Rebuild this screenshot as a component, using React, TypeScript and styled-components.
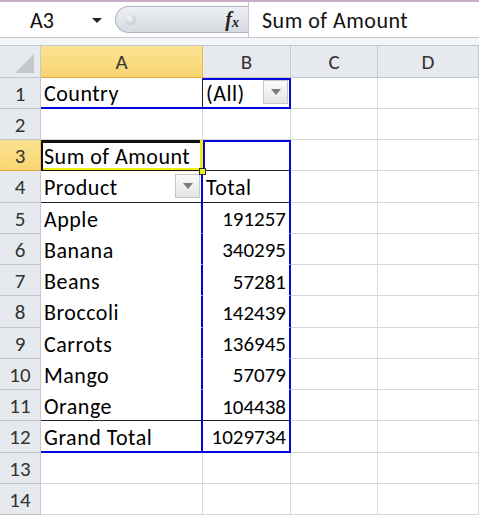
import { Fragment, ReactNode } from 'react';
import styled, { createGlobalStyle, css } from 'styled-components';

const GRID = '#d9d9d9';
const BLUE = '#0606dc';
const YEL = '#f2ef10';
const FONT = `"Carlito", Lato, "Liberation Sans", sans-serif`;

const GlobalStyle = createGlobalStyle`
  html, body { margin: 0; padding: 0; background: #fff; }
  body { font-family: ${FONT}; overflow: hidden; }
  * { box-sizing: border-box; }
`;

interface Edge {
  w: number;
  c: string;
}

const blue2: Edge = { w: 2, c: BLUE };
const black1: Edge = { w: 1, c: '#222' };
const white1: Edge = { w: 1, c: '#fff' };

const line = (e: Edge | undefined) => (e ? `${e.w}px solid ${e.c}` : `1px solid ${GRID}`);

const Window = styled.div`
  width: 479px;
  height: 515px;
  overflow: hidden;
  border-top: 2px solid #c9afc5;
  display: flex;
  flex-direction: column;
`;

const FormulaBar = styled.div`
  height: 37px;
  display: flex;
  align-items: center;
  background: #fff;
  border-bottom: 1px solid #c3c8cf;
`;

const NameBox = styled.div`
  width: 113px;
  height: 100%;
  display: flex;
  align-items: center;
  padding: 2px 11px 0 30px;
  font-size: 22px;
  color: #111;
`;

const Arrow = styled.span`
  margin-left: auto;
  border-left: 5px solid transparent;
  border-right: 5px solid transparent;
  border-top: 5px solid #222;
`;

const Pill = styled.div`
  width: 133px;
  height: 27px;
  margin-left: 2px;
  display: flex;
  align-items: center;
  padding: 0 9px 0 9px;
  border: 1px solid #aeb5c0;
  border-right: none;
  border-radius: 14px 0 0 14px;
  background: linear-gradient(#eef0f3, #d6dae0);
`;

const Dot = styled.span`
  width: 11px;
  height: 11px;
  border-radius: 50%;
  background: radial-gradient(circle at 40% 35%, #f6f6f6, #b9bcc2);
`;

const Fx = styled.span`
  margin-left: auto;
  font-family: "Liberation Serif", serif;
  font-style: italic;
  font-weight: bold;
  font-size: 20px;
  color: #222;
  sub {
    font-size: 14px;
    vertical-align: -1px;
  }
`;

const FormulaInput = styled.div`
  flex: 1;
  height: 100%;
  display: flex;
  align-items: center;
  padding: 2px 0 0 13px;
  border-left: 1px solid #c3c8cf;
  font-size: 22px;
  letter-spacing: 0.5px;
  color: #111;
`;

const Strip = styled.div`
  height: 8px;
  background: #f4f5f7;
  border-bottom: 1px solid #c3c8cf;
`;

const Sheet = styled.div`
  display: grid;
  grid-template-columns: 41px 162px 88px 87px 1fr;
  grid-auto-rows: 31.25px;
`;

const Head = styled.div<{ $sel?: boolean }>`
  display: flex;
  align-items: center;
  justify-content: center;
  padding-top: 2px;
  font-size: 21px;
  color: #333;
  background: #e6e9ed;
  border-right: 1px solid #c6cad0;
  border-bottom: 1px solid #c2c6cc;
  ${(p) =>
    p.$sel &&
    css`
      background: linear-gradient(#fbe293, #f9d570);
      border-right-color: #e9bd4c;
      border-bottom-color: #e2ad3a;
    `}
`;

const Corner = styled(Head)`
  align-items: flex-end;
  justify-content: flex-end;
  padding: 0 6px 4px 0;
`;

interface CellProps {
  $r?: Edge;
  $b?: Edge;
  $t?: Edge;
  $l?: Edge;
  $num?: boolean;
  $sel?: boolean;
}

const Cell = styled.div<CellProps>`
  position: relative;
  display: flex;
  align-items: center;
  justify-content: ${(p) => (p.$num ? 'flex-end' : 'flex-start')};
  padding: 3px 3px 0 3px;
  font-size: ${(p) => (p.$num ? 21 : 22)}px;
  letter-spacing: ${(p) => (p.$num ? 0 : 0.5)}px;
  color: #000;
  background: #fff;
  white-space: nowrap;
  border-right: ${(p) => line(p.$r)};
  border-bottom: ${(p) => line(p.$b)};
  box-shadow: ${(p) =>
    [p.$t && `inset 0 ${p.$t.w}px 0 ${p.$t.c}`, p.$l && `inset ${p.$l.w}px 0 0 ${p.$l.c}`]
      .filter(Boolean)
      .join(', ') || 'none'};
  ${(p) =>
    p.$sel &&
    css`
      border-right: 3px solid ${YEL};
      border-bottom: 1px solid #111;
      box-shadow: inset 0 3px 0 #111, inset 2px 0 0 #111, inset 0 -2px 0 ${YEL};
    `}
`;

const FillHandle = styled.span`
  position: absolute;
  right: -6px;
  bottom: -5px;
  width: 7px;
  height: 7px;
  background: ${YEL};
  border: 1px solid #333;
  z-index: 2;
`;

const DropButton = styled.span<{ $edge?: number }>`
  margin-left: auto;
  margin-right: ${(p) => p.$edge ?? 0}px;
  margin-top: -3px;
  width: 25px;
  height: 24px;
  border: 1px solid #c6c6c6;
  background: linear-gradient(#fbfbfb, #e4e4e4);
  display: flex;
  align-items: center;
  justify-content: center;
  &::after {
    content: '';
    border-left: 5px solid transparent;
    border-right: 5px solid transparent;
    border-top: 6px solid #7a7a7a;
  }
`;

interface RowProps {
  n: number;
  sel?: boolean;
  a?: CellProps & { children?: ReactNode };
  b?: CellProps & { children?: ReactNode };
}

function Row({ n, sel, a = {}, b = {} }: RowProps) {
  const { children: ac, ...ap } = a;
  const { children: bc, ...bp } = b;
  return (
    <Fragment>
      <Head $sel={sel}>{n}</Head>
      <Cell {...ap}>{ac}</Cell>
      <Cell {...bp}>{bc}</Cell>
      <Cell />
      <Cell />
    </Fragment>
  );
}

const items: [string, number][] = [
  ['Apple', 191257],
  ['Banana', 340295],
  ['Beans', 57281],
  ['Broccoli', 142439],
  ['Carrots', 136945],
  ['Mango', 57079],
  ['Orange', 104438],
];

export default function App() {
  return (
    <Window>
      <GlobalStyle />
      <FormulaBar>
        <NameBox>
          A3
          <Arrow />
        </NameBox>
        <Pill>
          <Dot />
          <Fx>
            f<sub>x</sub>
          </Fx>
        </Pill>
        <FormulaInput>Sum of Amount</FormulaInput>
      </FormulaBar>
      <Strip />
      <Sheet>
        <Corner>
          <svg width="19" height="19" viewBox="0 0 19 19">
            <path d="M19 0 L19 19 L0 19 Z" fill="#c3c6cb" />
          </svg>
        </Corner>
        <Head $sel>A</Head>
        <Head>B</Head>
        <Head>C</Head>
        <Head>D</Head>

        <Row
          n={1}
          a={{ $r: black1, $b: blue2, children: 'Country' }}
          b={{
            $t: blue2,
            $r: blue2,
            $b: blue2,
            children: (
              <>
                (All)
                <DropButton $edge={-2} />
              </>
            ),
          }}
        />
        <Row n={2} />
        <Row
          n={3}
          sel
          a={{
            $sel: true,
            children: (
              <>
                Sum of Amount
                <FillHandle />
              </>
            ),
          }}
          b={{ $t: blue2, $l: blue2, $r: blue2, $b: black1 }}
        />
        <Row
          n={4}
          a={{
            $r: blue2,
            $b: black1,
            children: (
              <>
                Product
                <DropButton $edge={-2} />
              </>
            ),
          }}
          b={{ $r: blue2, $b: black1, children: 'Total' }}
        />
        {items.map(([name, amount], i) => {
          const last = i === items.length - 1;
          const edge = last ? black1 : white1;
          return (
            <Row
              key={name}
              n={5 + i}
              a={{ $r: blue2, $b: edge, children: name }}
              b={{ $r: blue2, $b: edge, $num: true, children: amount }}
            />
          );
        })}
        <Row
          n={12}
          a={{ $r: blue2, $b: blue2, children: 'Grand Total' }}
          b={{ $r: blue2, $b: blue2, $num: true, children: 1029734 }}
        />
        <Row n={13} />
        <Row n={14} />
      </Sheet>
    </Window>
  );
}
